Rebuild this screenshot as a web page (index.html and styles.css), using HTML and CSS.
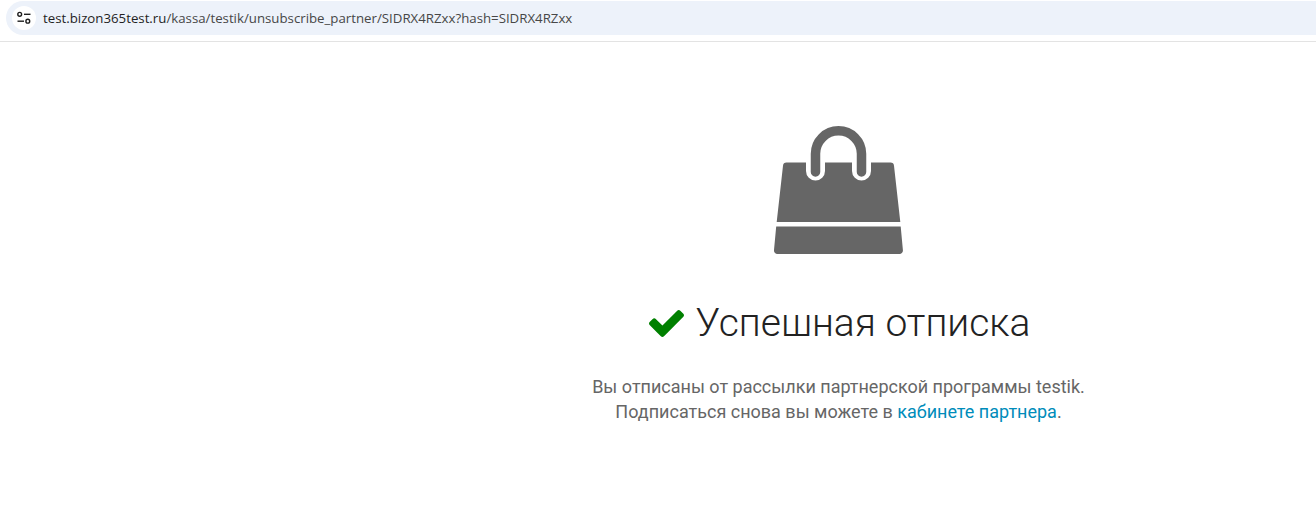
FILE: index.html
```html
<!DOCTYPE html>
<html lang="ru">
<head>
<meta charset="utf-8">
<title>Успешная отписка</title>
<link rel="stylesheet" href="styles.css">
</head>
<body>
<header class="browser">
  <div class="omnibox">
    <span class="site-icon">
      <svg width="16" height="16" viewBox="0 0 16 16" fill="none" stroke="#1f1f1f" stroke-width="1.4">
        <circle cx="3.7" cy="4.3" r="1.9"/>
        <path d="M8 4.3h6.5"/>
        <circle cx="11.8" cy="11.2" r="1.9"/>
        <path d="M1.5 11.2h6.5"/>
      </svg>
    </span>
    <span class="url"><span class="host">test.bizon365test.ru</span>/kassa/testik/unsubscribe_partner/SIDRX4RZxx?hash=SIDRX4RZxx</span>
  </div>
</header>
<main class="page">
  <div class="content">
    <svg class="bag" width="129" height="128" viewBox="0 0 129 128">
      <path fill="#666" d="M12.500 36.500H116.500a3.500 3.500 0 0 1 3.500 3.200L126.300 96H2.700L9 39.700A3.500 3.500 0 0 1 12.500 36.500Z"/>
      <path fill="#666" d="M2.200 100.500H126.700L128.900 124a3.500 3.500 0 0 1-3.500 4H3.500a3.500 3.500 0 0 1-3.500-4Z"/>
      <path fill="none" stroke="#fff" stroke-width="19" stroke-linecap="round" d="M41.500 30V45M87.500 30V45"/>
      <path fill="none" stroke="#666" stroke-width="9.500" stroke-linecap="round" d="M41.500 46V27.800a23 23 0 0 1 46 0V46"/>
    </svg>
    <h1 class="title">
      <svg class="check" width="35" height="27" viewBox="121 334 1550 1188"><path fill="#008000" d="M1671 566q0 40-28 68l-724 724-136 136q-28 28-68 28t-68-28l-136-136-362-362q-28-28-28-68t28-68l136-136q28-28 68-28t68 28l294 295 656-657q28-28 68-28t68 28l136 136q28 28 28 68z"/></svg>
      <span>Успешная отписка</span>
    </h1>
    <p class="message">Вы отписаны от рассылки партнерской программы testik.<br>Подписаться снова вы можете в <a class="link" href="#">кабинете партнера</a>.</p>
  </div>
</main>
</body>
</html>
```
FILE: styles.css
```css
html, body {
  margin: 0;
  padding: 0;
  background: #fff;
}
body {
  font-family: Roboto, "Liberation Sans", sans-serif;
  height: 520px;
  overflow: hidden;
}
.browser {
  border-bottom: 1px solid #e3e3e3;
  padding: 1px 0 0 6px;
  box-sizing: border-box;
  height: 42px;
}
.omnibox {
  display: flex;
  align-items: center;
  height: 34px;
  background: #edf2fa;
  border-radius: 17px 0 0 17px;
  padding-left: 6px;
}
.site-icon {
  width: 24px;
  height: 24px;
  border-radius: 50%;
  background: #fff;
  display: flex;
  align-items: center;
  justify-content: center;
  margin-right: 7px;
}
.url {
  font-family: "Open Sans", "Noto Sans", sans-serif;
  font-size: 13.25px;
  color: #474747;
  white-space: nowrap;
}
.host {
  color: #1f1f1f;
}
.page {
  padding-left: 361px;
}
.content {
  display: flex;
  flex-direction: column;
  align-items: center;
  padding-top: 84px;
}
.bag {
  display: block;
}
.title {
  display: flex;
  align-items: center;
  gap: 11px;
  margin: 44px 0 0;
  padding-left: 3px;
  font-size: 39px;
  line-height: 50px;
  font-weight: 300;
  color: #222;
}
.check {
  flex: none;
}
.message {
  margin: 26px 0 0;
  font-size: 18px;
  line-height: 25px;
  color: #666;
  text-align: center;
}
.link {
  color: #008cba;
  text-decoration: none;
}
```
